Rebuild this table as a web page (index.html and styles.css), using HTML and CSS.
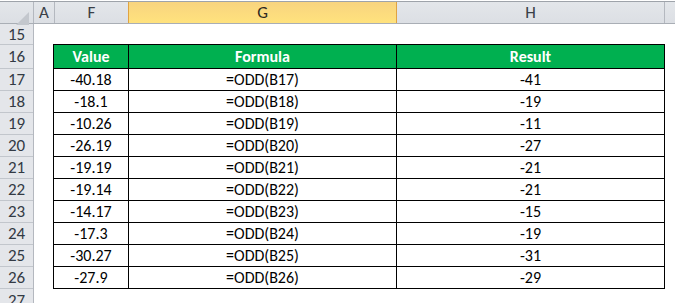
FILE: index.html
```html
<!DOCTYPE html>
<html>
<head>
<meta charset="utf-8">
<link rel="stylesheet" href="styles.css">
</head>
<body>
<div class="sheet">
  <div class="colhead">
    <div class="corner">
      <svg class="tri" width="14" height="14" viewBox="0 0 14 14"><polygon points="13,0 13,13 0,13" fill="#c3c7cd"/></svg>
    </div>
    <div class="ch ch-a">A</div>
    <div class="ch ch-f">F</div>
    <div class="ch ch-g">G</div>
    <div class="ch ch-h">H</div>
    <div class="ch ch-rest"></div>
  </div>
  <div class="body">
    <div class="rowheads">
      <div class="rh rh15">15</div>
      <div class="rh rh16">16</div>
      <div class="rh">17</div>
      <div class="rh">18</div>
      <div class="rh">19</div>
      <div class="rh">20</div>
      <div class="rh">21</div>
      <div class="rh">22</div>
      <div class="rh">23</div>
      <div class="rh">24</div>
      <div class="rh">25</div>
      <div class="rh">26</div>
      <div class="rh rh27">27</div>
    </div>
    <div class="content">
      <div class="spacer"></div>
      <div class="table">
        <div class="th">Value</div><div class="th">Formula</div><div class="th">Result</div>
        <div class="td">-40.18</div><div class="td">=ODD(B17)</div><div class="td">-41</div>
        <div class="td">-18.1</div><div class="td">=ODD(B18)</div><div class="td">-19</div>
        <div class="td">-10.26</div><div class="td">=ODD(B19)</div><div class="td">-11</div>
        <div class="td">-26.19</div><div class="td">=ODD(B20)</div><div class="td">-27</div>
        <div class="td">-19.19</div><div class="td">=ODD(B21)</div><div class="td">-21</div>
        <div class="td">-19.14</div><div class="td">=ODD(B22)</div><div class="td">-21</div>
        <div class="td">-14.17</div><div class="td">=ODD(B23)</div><div class="td">-15</div>
        <div class="td">-17.3</div><div class="td">=ODD(B24)</div><div class="td">-19</div>
        <div class="td">-30.27</div><div class="td">=ODD(B25)</div><div class="td">-31</div>
        <div class="td">-27.9</div><div class="td">=ODD(B26)</div><div class="td">-29</div>
      </div>
    </div>
  </div>
</div>
</body>
</html>
```

FILE: styles.css
```css
* { box-sizing: border-box; }
html, body { margin: 0; padding: 0; background: #fff; }
body {
  width: 675px;
  height: 303px;
  overflow: hidden;
  font-family: "Carlito", "Open Sans", "Liberation Sans", sans-serif;
  font-size: 16px;
  color: #000;
}
.sheet { display: flex; flex-direction: column; height: 303px; }

.colhead {
  display: flex;
  margin-top: 1px;
  height: 26px;
  border-top: 1px solid #9ea3aa;
  border-bottom: 1px solid #a9aeb5;
  background: linear-gradient(#e3e6ea, #dcdfe4);
}
.corner {
  position: relative;
  width: 34px;
  border-right: 1px solid #b4b8bf;
}
.tri { position: absolute; left: 16px; top: 10px; }
.ch {
  display: flex;
  align-items: center;
  justify-content: center;
  color: #3a3f47;
  font-size: 17px;
  border-right: 1px solid #b4b8bf;
}
.ch-a { width: 21px; }
.ch-f { width: 73px; border-right: none; }
.ch-g {
  width: 269px;
  border-left: 1px solid #e0a341;
  border-right: 1px solid #e0a341;
  background: linear-gradient(#f8d47f, #ffe27d);
  color: #2e2a22;
}
.ch-h { width: 268px; }
.ch-rest { flex: 1; border-right: none; }

.body { display: flex; flex: 1; }
.rowheads {
  width: 34px;
  display: flex;
  flex-direction: column;
  background: #e4e6ea;
  border-right: 1px solid #b4b8bf;
}
.rh {
  height: 22px;
  border-bottom: 1px solid #c2c6cc;
  display: flex;
  align-items: center;
  justify-content: center;
  color: #333a44;
  font-size: 17px;
}
.rh15 { height: 21px; }
.rh16 { height: 24px; }
.rh27 { flex: 1; border-bottom: none; align-items: flex-start; padding-top: 1px; }

.content { flex: 1; display: flex; flex-direction: column; }
.spacer { height: 20px; }
.table {
  margin-left: 19px;
  width: 612px;
  display: grid;
  grid-template-columns: 74px 267px 267px;
  grid-template-rows: 23px repeat(10, 21px);
  gap: 1px;
  padding: 1px;
  background: #000;
}
.th, .td {
  display: flex;
  align-items: center;
  justify-content: center;
}
.th { background: #00b050; color: #fff; font-weight: bold; font-size: 16px; }
.td { background: #fff; }
```
